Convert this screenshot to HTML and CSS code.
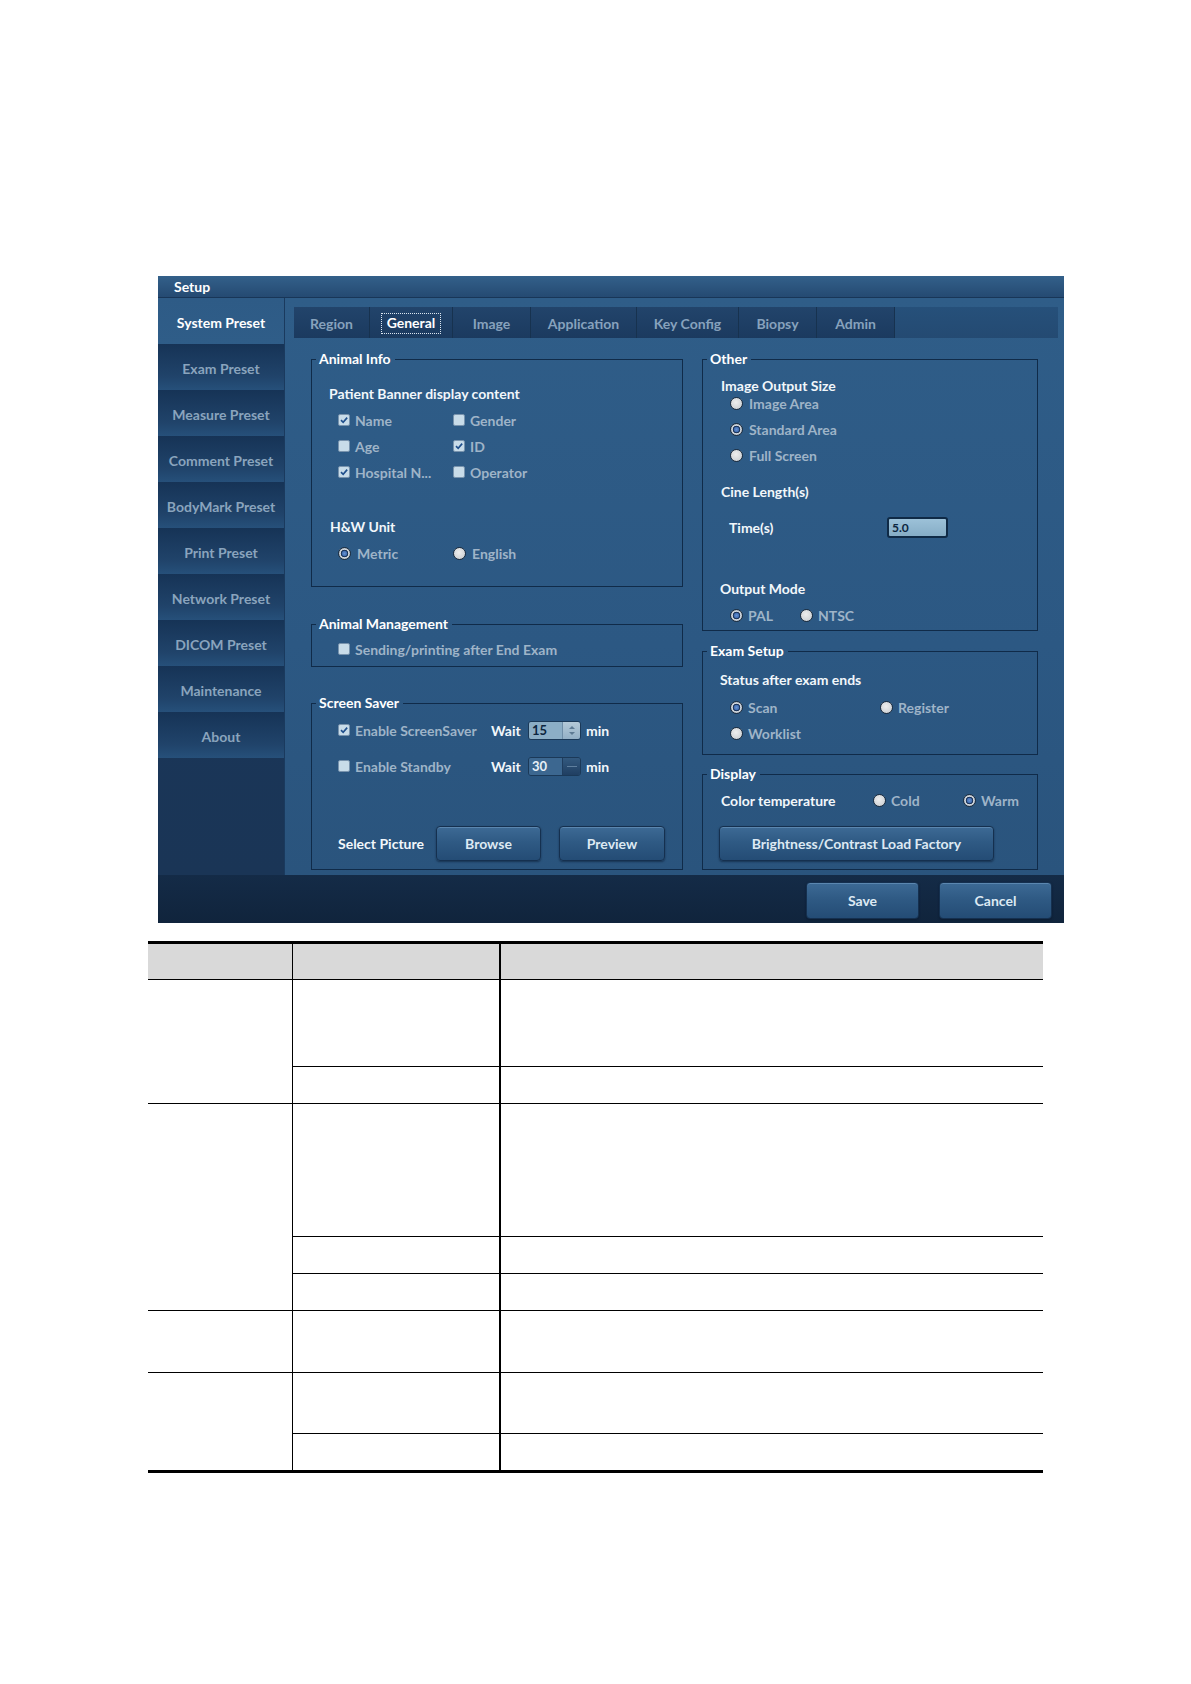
FILE: index.html
```html
<!DOCTYPE html>
<html lang="en">
<head>
<meta charset="utf-8">
<title>Setup</title>
<link rel="stylesheet" href="styles.css">
</head>
<body>
<div class="window">
  <div class="titlebar">Setup</div>
  <div class="main">
    <nav class="sidebar">
      <div class="nav-item active">System Preset</div>
      <div class="nav-item">Exam Preset</div>
      <div class="nav-item">Measure Preset</div>
      <div class="nav-item">Comment Preset</div>
      <div class="nav-item">BodyMark Preset</div>
      <div class="nav-item">Print Preset</div>
      <div class="nav-item">Network Preset</div>
      <div class="nav-item">DICOM Preset</div>
      <div class="nav-item">Maintenance</div>
      <div class="nav-item">About</div>
    </nav>
    <section class="content">
      <div class="tabs">
        <div class="tab w76">Region</div>
        <div class="tab w83 active"><span>General</span></div>
        <div class="tab w78">Image</div>
        <div class="tab w106">Application</div>
        <div class="tab w102">Key Config</div>
        <div class="tab w78">Biopsy</div>
        <div class="tab w78">Admin</div>
        <div class="tab-fill"></div>
      </div>
      <div class="cols">
        <div class="col col-left">
          <fieldset class="group g-animal">
            <legend>Animal Info</legend>
            <div class="sub first">Patient Banner display content</div>
            <div class="opt-grid cb-grid">
              <div class="opt"><span class="cb"><svg viewBox="0 0 12 12"><path d="M2.4 6.2 L5 8.8 L9.8 3.2"/></svg></span><span class="dim">Name</span></div>
              <div class="opt"><span class="cb"></span><span class="dim">Gender</span></div>
              <div class="opt"><span class="cb"></span><span class="dim">Age</span></div>
              <div class="opt"><span class="cb"><svg viewBox="0 0 12 12"><path d="M2.4 6.2 L5 8.8 L9.8 3.2"/></svg></span><span class="dim">ID</span></div>
              <div class="opt"><span class="cb"><svg viewBox="0 0 12 12"><path d="M2.4 6.2 L5 8.8 L9.8 3.2"/></svg></span><span class="dim">Hospital N...</span></div>
              <div class="opt"><span class="cb"></span><span class="dim">Operator</span></div>
            </div>
            <div class="sub hw">H&amp;W Unit</div>
            <div class="opt-grid rb-row">
              <div class="opt"><span class="rb on"></span><span class="dim">Metric</span></div>
              <div class="opt"><span class="rb"></span><span class="dim">English</span></div>
            </div>
          </fieldset>

          <fieldset class="group g-mgmt">
            <legend>Animal Management</legend>
            <div class="opt mgmt-row"><span class="cb"></span><span class="dim">Sending/printing after End Exam</span></div>
          </fieldset>

          <fieldset class="group g-saver">
            <legend>Screen Saver</legend>
            <div class="saver-row r1">
              <div class="opt saver-opt"><span class="cb"><svg viewBox="0 0 12 12"><path d="M2.4 6.2 L5 8.8 L9.8 3.2"/></svg></span><span class="dim">Enable ScreenSaver</span></div>
              <span class="lbl wait">Wait</span>
              <div class="spin"><span class="spin-val">15</span><span class="spin-btn"><i class="up"></i><i class="down"></i></span></div>
              <span class="lbl">min</span>
            </div>
            <div class="saver-row r2">
              <div class="opt saver-opt"><span class="cb"></span><span class="dim">Enable Standby</span></div>
              <span class="lbl wait">Wait</span>
              <div class="spin off"><span class="spin-val">30</span><span class="spin-btn"><i class="bar"></i></span></div>
              <span class="lbl">min</span>
            </div>
            <div class="picture-row">
              <span class="lbl pic-lbl">Select Picture</span>
              <button class="btn btn-browse">Browse</button>
              <button class="btn btn-preview">Preview</button>
            </div>
          </fieldset>
        </div>

        <div class="col col-right">
          <fieldset class="group g-other">
            <legend>Other</legend>
            <div class="sub ios">Image Output Size</div>
            <div class="radio-list">
              <div class="opt"><span class="rb"></span><span class="dim">Image Area</span></div>
              <div class="opt"><span class="rb on"></span><span class="dim">Standard Area</span></div>
              <div class="opt"><span class="rb"></span><span class="dim">Full Screen</span></div>
            </div>
            <div class="sub cine">Cine Length(s)</div>
            <div class="time-row">
              <span class="lbl time-lbl">Time(s)</span>
              <div class="field">5.0</div>
            </div>
            <div class="sub outmode">Output Mode</div>
            <div class="pal-row">
              <div class="opt w70"><span class="rb on"></span><span class="dim">PAL</span></div>
              <div class="opt"><span class="rb"></span><span class="dim">NTSC</span></div>
            </div>
          </fieldset>

          <fieldset class="group g-exam">
            <legend>Exam Setup</legend>
            <div class="sub status">Status after exam ends</div>
            <div class="opt-grid exam-grid">
              <div class="opt"><span class="rb on"></span><span class="dim">Scan</span></div>
              <div class="opt"><span class="rb"></span><span class="dim">Register</span></div>
              <div class="opt"><span class="rb"></span><span class="dim">Worklist</span></div>
            </div>
          </fieldset>

          <fieldset class="group g-display">
            <legend>Display</legend>
            <div class="color-row">
              <span class="lbl color-lbl">Color temperature</span>
              <div class="opt w90"><span class="rb"></span><span class="dim">Cold</span></div>
              <div class="opt"><span class="rb on"></span><span class="dim">Warm</span></div>
            </div>
            <button class="btn btn-bc">Brightness/Contrast Load Factory</button>
          </fieldset>
        </div>
      </div>
    </section>
  </div>
  <div class="footer">
    <button class="btn btn-foot">Save</button>
    <button class="btn btn-foot">Cancel</button>
  </div>
</div>

<table class="doc">
  <colgroup><col class="c1"><col class="c2"><col class="c3"></colgroup>
  <thead>
    <tr class="hr"><th></th><th></th><th></th></tr>
  </thead>
  <tbody>
    <tr class="r87"><td rowspan="2"></td><td></td><td class="last"></td></tr>
    <tr class="r37"><td></td><td class="last"></td></tr>
    <tr class="r133"><td rowspan="3"></td><td></td><td class="last"></td></tr>
    <tr class="r37"><td></td><td class="last"></td></tr>
    <tr class="r37"><td></td><td class="last"></td></tr>
    <tr class="r62"><td></td><td></td><td class="last"></td></tr>
    <tr class="r61"><td rowspan="2"></td><td></td><td class="last"></td></tr>
    <tr class="r38"><td></td><td class="last"></td></tr>
  </tbody>
</table>
</body>
</html>
```

FILE: styles.css
```css
* { box-sizing: border-box; }

body {
  margin: 0;
  background: #ffffff;
  font-family: Lato, "Open Sans", "DejaVu Sans", sans-serif;
  font-weight: 700;
  font-size: 14px;
}

.window {
  width: 906px;
  margin: 276px 0 0 158px;
  background: #2c5882;
}

.titlebar {
  height: 22px;
  line-height: 21px;
  padding-left: 16px;
  color: #ffffff;
  font-size: 14px;
  background: linear-gradient(#33608a, #254a72);
  border-bottom: 1px solid #183658;
}

.main {
  display: flex;
  height: 577px;
}

.sidebar {
  width: 127px;
  display: flex;
  flex-direction: column;
  background: linear-gradient(#1c3a5d, #1a3659 50%, #1a3556);
  border-right: 1px solid #1a3a5e;
}

.nav-item {
  height: 46px;
  flex: none;
  display: flex;
  align-items: center;
  justify-content: center;
  padding-top: 3px;
  color: #8aa4bd;
  white-space: nowrap;
  background: linear-gradient(#163356, #20436a 70%, #26507a);
}

.nav-item.active {
  color: #ffffff;
  background: linear-gradient(#2e5b86, #2f5d88);
}

.content {
  flex: 1;
  padding: 9px 6px 0 9px;
  background: linear-gradient(#2f5d88, #2c5883 60%, #2a547d);
}

.tabs {
  display: flex;
  height: 31px;
  background: #24496f;
}

.tab {
  flex: none;
  display: flex;
  align-items: center;
  justify-content: center;
  padding-top: 1px;
  color: #87a2bd;
  white-space: nowrap;
  background: linear-gradient(#22446b, #1b3a5f);
  border-right: 1px solid #17324f;
}

.tab.active span {
  color: #ffffff;
  border: 1px dotted #dce7f1;
  padding: 1px 5px 2px;
  line-height: 16px;
}

.w76 { width: 76px; }
.w83 { width: 83px; }
.w78 { width: 78px; }
.w106 { width: 106px; }
.w102 { width: 102px; }

.tab-fill {
  flex: 1;
  background: linear-gradient(#26507a, #244a72);
}

.cols {
  display: flex;
  gap: 19px;
  margin: 13px 0 0 17px;
}

.col {
  display: flex;
  flex-direction: column;
}

.col-left { width: 372px; }
.col-right { width: 336px; }

.group {
  margin: 0;
  padding: 0;
  min-width: 0;
  border: 1px solid #102b49;
}

.group legend {
  margin-left: 4px;
  padding: 0 4px 0 3px;
  height: 16px;
  line-height: 16px;
  color: #ffffff;
}

.g-animal { height: 236px; }
.g-mgmt { height: 51px; margin-top: 29px; }
.g-saver { height: 175px; margin-top: 28px; }
.g-other { height: 280px; }
.g-exam { height: 112px; margin-top: 12px; }
.g-display { height: 104px; margin-top: 11px; }

.sub {
  color: #f2f7fb;
  line-height: 16px;
  padding-left: 17px;
  white-space: nowrap;
}

.lbl { color: #f2f7fb; white-space: nowrap; }
.dim { color: #9fb4c8; white-space: nowrap; }

.opt {
  display: flex;
  align-items: center;
  gap: 5px;
  height: 100%;
}

/* checkbox */
.cb {
  width: 12px;
  height: 12px;
  flex: none;
  border-radius: 2px;
  background: #c8dce9;
  border: 1px solid #7893ad;
  display: inline-flex;
}

.cb svg {
  width: 10px;
  height: 10px;
  fill: none;
  stroke: #1f4f8c;
  stroke-width: 2;
}

/* radio */
.rb {
  width: 13px;
  height: 13px;
  flex: none;
  border-radius: 50%;
  border: 1px solid #1d2c3d;
  background: radial-gradient(circle at 45% 40%, #eeeeee, #d3d6d9 65%, #b5bbc1);
}

.rb.on {
  background: radial-gradient(circle, #6b93cf 0, #3f6db3 2.4px, #1b3358 3.1px, #1b3358 3.5px, #d2d8de 4.1px, #b6bec7 5.5px);
}

/* Animal Info */
.sub.first { margin-top: 18px; line-height: 18px; }

.opt-grid {
  display: grid;
  grid-template-columns: 115px auto;
}

.cb-grid {
  margin-top: 4px;
  padding-left: 26px;
  grid-auto-rows: 26px;
}

.sub.hw { margin-top: 33px; line-height: 18px; padding-left: 18px; }

.rb-row {
  margin-top: 7px;
  padding-left: 26px;
  grid-auto-rows: 20px;
}

.rb-row .opt { gap: 6px; }

/* Animal Management */
.mgmt-row {
  height: 20px;
  margin-top: 7px;
  padding-left: 26px;
}

/* Screen saver */
.saver-row {
  display: flex;
  align-items: center;
  height: 20px;
  padding-left: 26px;
}

.saver-row.r1 { margin-top: 9px; }
.saver-row.r2 { margin-top: 16px; }

.saver-opt { width: 153px; }
.wait { width: 37px; }

.spin {
  width: 53px;
  height: 19px;
  display: flex;
  border: 1px solid #1b3958;
  border-radius: 3px;
  overflow: hidden;
  margin-right: 5px;
}

.spin-val {
  flex: 1;
  background: #8caec6;
  color: #0c2640;
  padding-left: 3px;
  line-height: 17px;
  font-size: 13px;
}

.spin-btn {
  width: 18px;
  background: linear-gradient(#b4c9d8, #93b0c6);
  display: flex;
  flex-direction: column;
  align-items: center;
  justify-content: center;
  gap: 3px;
  border-left: 1px solid #6f8ea8;
}

.spin-btn .up {
  width: 0; height: 0;
  border-left: 3px solid transparent;
  border-right: 3px solid transparent;
  border-bottom: 3px solid #5d7a93;
}

.spin-btn .down {
  width: 0; height: 0;
  border-left: 3px solid transparent;
  border-right: 3px solid transparent;
  border-top: 3px solid #5d7a93;
}

.spin.off .spin-val {
  background: #3c6790;
  color: #e8f0f7;
}

.spin.off .spin-btn {
  background: linear-gradient(#33597f, #203f62);
  border-left-color: #1f3d5e;
}

.spin.off .spin-btn .bar {
  width: 10px;
  height: 1px;
  background: #5f7f9e;
}

.picture-row {
  display: flex;
  align-items: center;
  margin-top: 50px;
  padding-left: 26px;
}

.pic-lbl { width: 98px; }

.btn {
  font-family: inherit;
  font-weight: 700;
  font-size: 14px;
  color: #dde9f3;
  border: 1px solid #15304f;
  border-radius: 4px;
  background: linear-gradient(#3d6a95, #2f5a84 45%, #244c75);
  box-shadow: inset 0 1px 0 rgba(150, 190, 225, 0.35), 0 1px 2px rgba(5, 20, 40, 0.5);
  padding: 0;
  cursor: pointer;
}

.btn-browse { width: 105px; height: 35px; }
.btn-preview { width: 106px; height: 35px; margin-left: 18px; }

/* Other */
.sub.ios { margin-top: 11px; padding-left: 18px; }

.radio-list {
  margin-top: -4px;
  padding-left: 27px;
  display: grid;
  grid-auto-rows: 26px;
}

.radio-list .opt { gap: 6px; }

.sub.cine { margin-top: 16px; padding-left: 18px; }

.time-row {
  display: flex;
  align-items: center;
  height: 20px;
  margin-top: 17px;
  padding-left: 26px;
}

.time-lbl { width: 158px; }

.field {
  width: 61px;
  height: 21px;
  border: 2px solid #0f2a46;
  border-radius: 3px;
  background: linear-gradient(#9cc1d8, #86adc6);
  color: #0c2640;
  padding-left: 3px;
  line-height: 17px;
  font-size: 12px;
}

.sub.outmode { margin-top: 44px; padding-left: 17px; }

.pal-row {
  display: flex;
  height: 20px;
  margin-top: 8px;
  padding-left: 27px;
}

.w70 { width: 70px; }
.w90 { width: 90px; }

/* Exam setup */
.sub.status { margin-top: 13px; }

.exam-grid {
  grid-template-columns: 150px auto;
  grid-auto-rows: 26px;
  margin-top: 6px;
  padding-left: 27px;
}

/* Display */
.color-row {
  display: flex;
  align-items: center;
  height: 20px;
  margin-top: 8px;
  padding-left: 18px;
}

.color-lbl { width: 152px; }

.btn-bc {
  display: block;
  width: 275px;
  height: 35px;
  margin: 16px 0 0 16px;
}

/* Footer */
.footer {
  height: 48px;
  display: flex;
  justify-content: flex-end;
  align-items: flex-start;
  gap: 20px;
  padding: 7px 12px 0 0;
  background: linear-gradient(#142b47, #10243c);
}

.btn-foot { width: 113px; height: 37px; }

/* Document table */
.doc {
  margin: 18px 0 0 148px;
  width: 895px;
  border-collapse: collapse;
  table-layout: fixed;
}

.doc .c1 { width: 144px; }
.doc .c2 { width: 208px; }
.doc .c3 { width: 543px; }

.doc th, .doc td {
  padding: 0;
  border: 1px solid #000;
}

.doc tr > *:first-child { border-left: none; }
.doc tr > *:last-child { border-right: none; }

.doc th {
  background: #d9d9d9;
  border-top: 3px solid #000;
  height: 37px;
}

.doc th:last-child, .doc td.last { border-left: 2px solid #000; }

.doc tbody tr:last-child td { border-bottom: 3px solid #000; }
.doc tbody tr.r61 td[rowspan] { border-bottom: 3px solid #000; }

.r87 { height: 87px; }
.r37 { height: 37px; }
.r133 { height: 133px; }
.r62 { height: 62px; }
.r61 { height: 61px; }
.r38 { height: 38px; }
```
